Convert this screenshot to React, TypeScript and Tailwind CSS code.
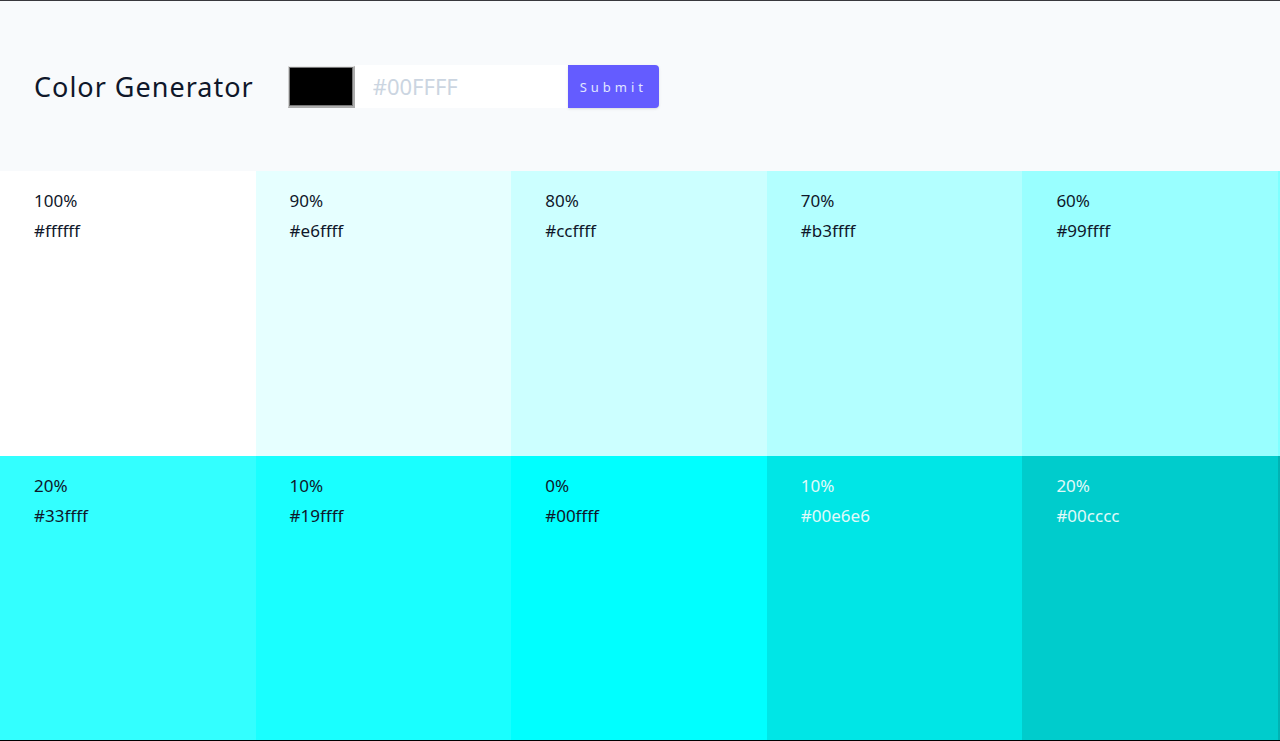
import { useState } from "react";
import type { FormEvent } from "react";

type Shade = {
  weight: number;
  hex: string;
  tile: string;
};

const lightShades: Shade[] = [
  { weight: 100, hex: "#ffffff", tile: "bg-[#ffffff] text-[#0f172a]" },
  { weight: 90, hex: "#e6ffff", tile: "bg-[#e6ffff] text-[#0f172a]" },
  { weight: 80, hex: "#ccffff", tile: "bg-[#ccffff] text-[#0f172a]" },
  { weight: 70, hex: "#b3ffff", tile: "bg-[#b3ffff] text-[#0f172a]" },
  { weight: 60, hex: "#99ffff", tile: "bg-[#99ffff] text-[#0f172a]" },
];

const deepShades: Shade[] = [
  { weight: 20, hex: "#33ffff", tile: "bg-[#33ffff] text-[#0f172a]" },
  { weight: 10, hex: "#19ffff", tile: "bg-[#19ffff] text-[#0f172a]" },
  { weight: 0, hex: "#00ffff", tile: "bg-[#00ffff] text-[#0f172a]" },
  { weight: 10, hex: "#00e6e6", tile: "bg-[#00e6e6] text-[#e0fafa]" },
  { weight: 20, hex: "#00cccc", tile: "bg-[#00cccc] text-[#e0fafa]" },
];

function ColorForm() {
  const [color, setColor] = useState("");

  const handleSubmit = (event: FormEvent) => {
    event.preventDefault();
  };

  return (
    <form onSubmit={handleSubmit} className="flex h-[43px] items-stretch">
      <input
        type="color"
        aria-label="Pick a color"
        value={color || "#000000"}
        onChange={(event) => setColor(event.target.value)}
        className="mt-px h-[42px] w-[67px] border border-t-[#e8e8e8] border-l-[#d0d0d0] border-r-2 border-b-2 border-r-[#adadad] border-b-[#adadad] [&::-webkit-color-swatch-wrapper]:p-0 [&::-webkit-color-swatch]:rounded-none [&::-webkit-color-swatch]:border [&::-webkit-color-swatch]:border-[#777777]"
      />
      <input
        type="text"
        aria-label="Color value"
        value={color}
        onChange={(event) => setColor(event.target.value)}
        placeholder="#00FFFF"
        className="w-[213px] bg-white px-[18px] text-[22px] text-[#0f172a] outline-none placeholder:text-[#cbd5e1]"
      />
      <button
        type="submit"
        className="rounded-r bg-[#645cff] px-3 text-[13px] leading-5 tracking-[4px] text-[#e0e7ff] shadow-sm"
      >
        Submit
      </button>
    </form>
  );
}

function ShadeRow({ shades, edge }: { shades: Shade[]; edge: string }) {
  return (
    <div className={`grid grid-cols-5 border-r-2 ${edge}`}>
      {shades.map((shade) => (
        <article
          key={shade.hex}
          className={`flex flex-col px-[34px] pt-[15px] text-[17px] leading-[30px] ${shade.tile}`}
        >
          <p>{shade.weight}%</p>
          <p>{shade.hex}</p>
        </article>
      ))}
    </div>
  );
}

export default function App() {
  return (
    <main className="flex min-h-screen flex-col border-t border-b border-t-[#38383d] border-b-black bg-[#f8fafc] font-['Noto_Sans',sans-serif] text-[#0f172a]">
      <header className="flex items-center gap-[34px] px-[34px] pt-16 pb-[63px]">
        <h1 className="text-[27px] leading-[42px] tracking-[1px]">Color Generator</h1>
        <ColorForm />
      </header>
      <section className="grid flex-1 auto-rows-fr">
        <ShadeRow shades={lightShades} edge="border-[#80ffff]" />
        <ShadeRow shades={deepShades} edge="border-[#00b3b3]" />
      </section>
    </main>
  );
}
